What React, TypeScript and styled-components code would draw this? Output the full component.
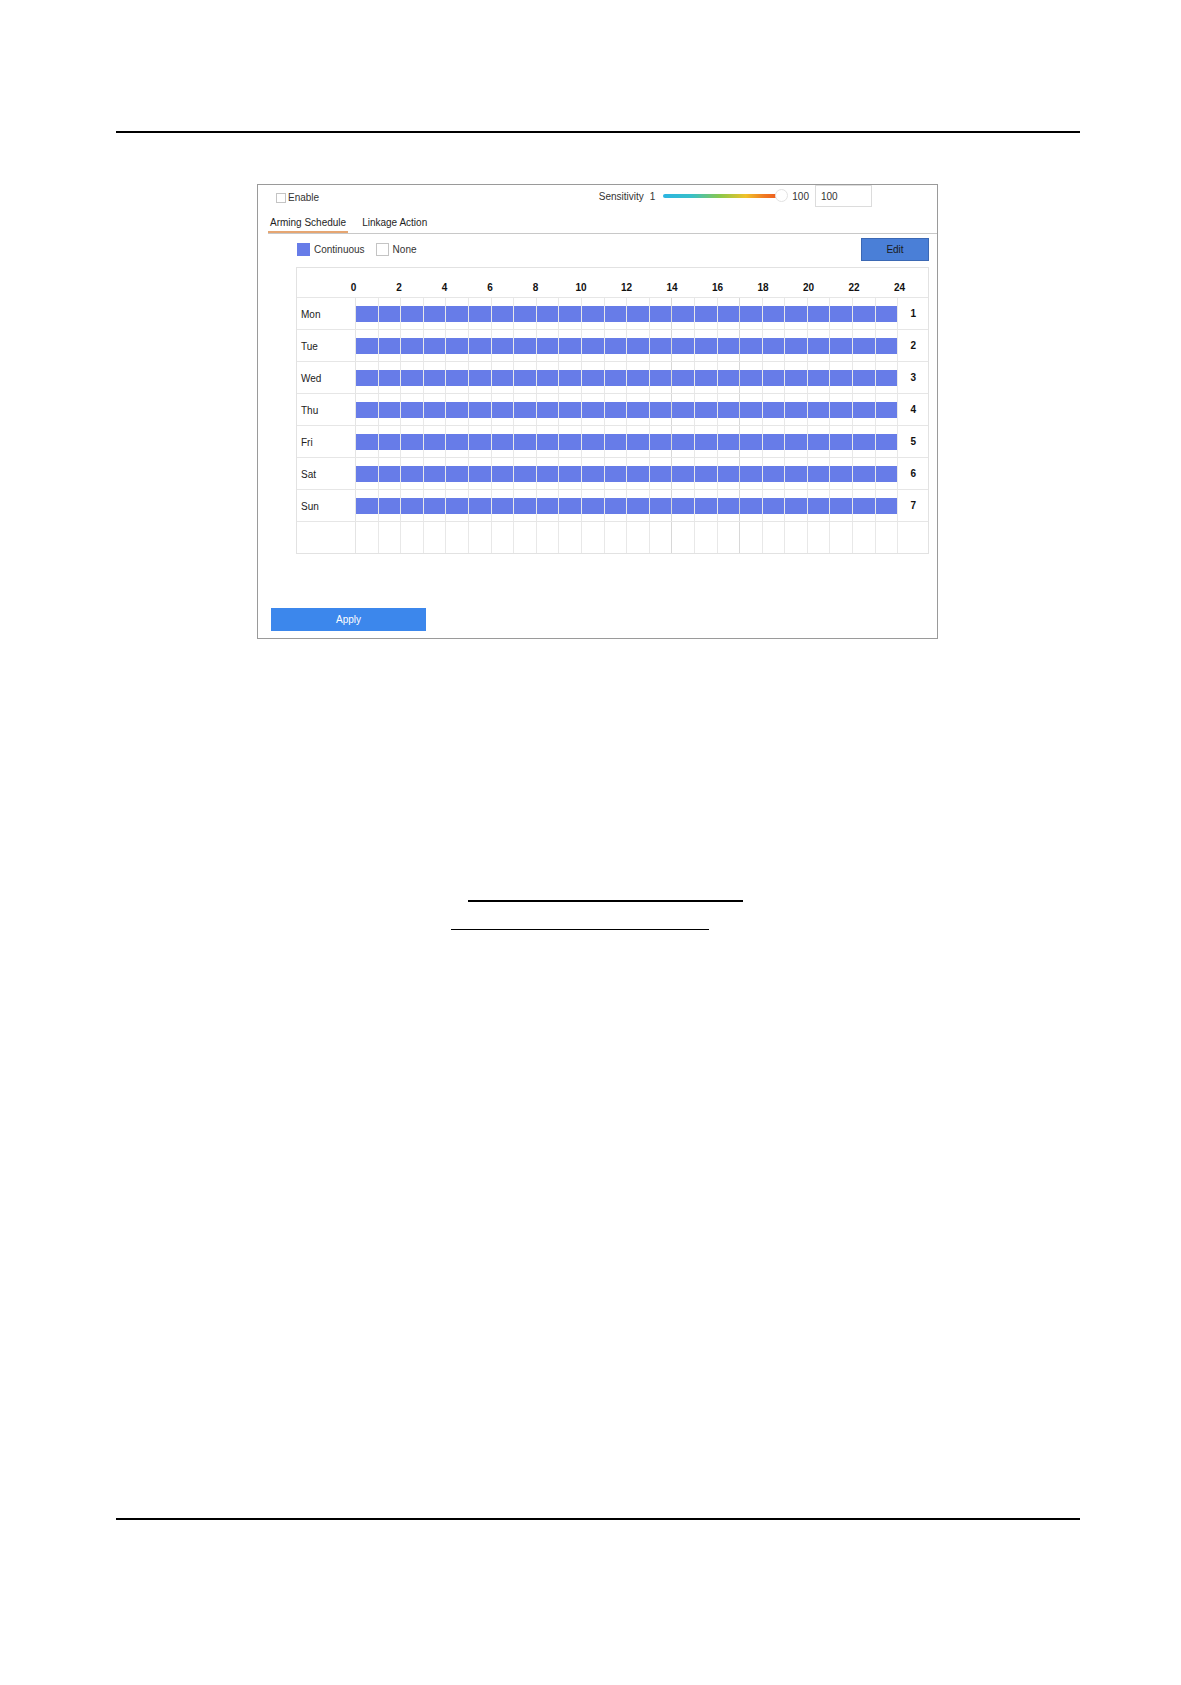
import React from 'react';
import styled, { createGlobalStyle } from 'styled-components';

const GlobalStyle = createGlobalStyle`
    body {
        margin: 0;
        background: #ffffff;
        font-family: 'Liberation Sans', Arial, sans-serif;
        color: #222222;
    }
`;

const Page = styled.div`
    width: 1181px;
    height: 1685px;
    display: flex;
    flex-direction: column;
    background: #ffffff;
`;

const Rule = styled.div<{ $top?: boolean }>`
    margin-left: 116px;
    width: 964px;
    height: 2px;
    background: #000000;
    margin-top: ${(props) => (props.$top ? '131px' : 'auto')};
    margin-bottom: ${(props) => (props.$top ? '0' : '165px')};
`;

const Panel = styled.div`
    box-sizing: border-box;
    margin: 51px 0 0 257px;
    width: 681px;
    height: 455px;
    border: 1px solid #9a9a9a;
    display: flex;
    flex-direction: column;
    font-size: 10px;
`;

const TopRow = styled.div`
    display: flex;
    align-items: center;
    height: 22px;
    padding: 0 65px 0 18px;
`;

const CheckLabel = styled.label`
    display: flex;
    align-items: center;
    gap: 2px;
    margin-top: 3px;
    color: #333333;
`;

const Box = styled.span<{ $size: number; $fill?: string }>`
    box-sizing: border-box;
    display: inline-block;
    width: ${(props) => props.$size}px;
    height: ${(props) => props.$size}px;
    border: 1px solid ${(props) => (props.$fill ? props.$fill : '#c4c4c4')};
    background: ${(props) => (props.$fill ? props.$fill : '#ffffff')};
`;

const Sensitivity = styled.div`
    margin-left: auto;
    display: flex;
    align-items: center;
    color: #333333;
`;

const One = styled.span`
    margin-left: 6px;
`;

const SliderTrack = styled.div`
    position: relative;
    width: 115px;
    height: 4px;
    margin: 0 14px 0 8px;
    border-radius: 2px;
    background: linear-gradient(90deg, #2cb5e2 0%, #38c0c8 25%, #8cc84a 50%, #f0c22a 72%, #f07a22 88%, #ee5a1e 100%);
`;

const Knob = styled.span`
    position: absolute;
    right: -10px;
    top: -5px;
    box-sizing: border-box;
    width: 13px;
    height: 13px;
    border-radius: 50%;
    background: #ffffff;
    border: 1px solid #e2e2e2;
`;

const ValueInput = styled.div`
    box-sizing: border-box;
    width: 57px;
    height: 22px;
    margin-left: 6px;
    padding-left: 5px;
    border: 1px solid #dcdcdc;
    display: flex;
    align-items: center;
    color: #333333;
`;

const Tabs = styled.div`
    display: flex;
    gap: 12px;
    margin: 7px 0 0 10px;
    border-bottom: 1px solid #c8c8c8;
`;

const Tab = styled.div<{ $active?: boolean }>`
    padding: 0 2px;
    line-height: 17px;
    color: #1e1e1e;
    border-bottom: 2px solid ${(props) => (props.$active ? '#e6a672' : 'transparent')};
`;

const Content = styled.div`
    margin: 0 8px 0 38px;
    display: flex;
    flex-direction: column;
`;

const LegendRow = styled.div`
    display: flex;
    align-items: center;
    height: 23px;
    margin-top: 4px;
    color: #333333;
`;

const LegendItem = styled.div`
    display: flex;
    align-items: center;
    gap: 4px;
    margin-left: 1px;
    margin-right: 10px;
`;

const EditButton = styled.button`
    margin-left: auto;
    box-sizing: border-box;
    width: 68px;
    height: 23px;
    border: 1px solid #3b68b4;
    background: #4a7fd7;
    color: #1a1a1a;
    font-family: 'Liberation Sans', Arial, sans-serif;
    font-size: 10px;
    padding: 0;
`;

const Grid = styled.div`
    margin-top: 6px;
    border: 1px solid #e2e2e2;
    display: flex;
    flex-direction: column;
`;

const HeaderRow = styled.div`
    display: flex;
    height: 30px;
    box-sizing: border-box;
    padding: 14px 0 0 33.75px;
    line-height: 12px;
    border-bottom: 1px solid #e6e6e6;
`;

const HourLabel = styled.span`
    width: 45.5px;
    flex: none;
    text-align: center;
    font-weight: bold;
    color: #111111;
`;

const DayRow = styled.div<{ $last?: boolean }>`
    display: flex;
    height: 31px;
    border-bottom: ${(props) => (props.$last ? 'none' : '1px solid #e6e6e6')};
`;

const DayName = styled.div`
    box-sizing: border-box;
    width: 59px;
    flex: none;
    padding: 1px 0 0 4px;
    display: flex;
    align-items: center;
    border-right: 1px solid #e4e4e4;
    color: #222222;
`;

const Cells = styled.div`
    display: flex;
    width: 542.4px;
    flex: none;
`;

const HourCell = styled.div<{ $mark?: boolean }>`
    box-sizing: border-box;
    width: 22.6px;
    flex: none;
    padding-top: 8px;
    border-right: 1px solid ${(props) => (props.$mark ? '#d8d8d8' : '#e8e8e8')};
`;

const Bar = styled.div`
    height: 16px;
    background: #677ce8;
`;

const DayNumber = styled.div`
    flex: 1;
    display: flex;
    align-items: center;
    justify-content: center;
    font-weight: bold;
    color: #111111;
`;

const ApplyButton = styled.button`
    box-sizing: border-box;
    width: 155px;
    height: 23px;
    margin: 54px 0 0 13px;
    border: none;
    background: #3c87ec;
    color: #ffffff;
    font-family: 'Liberation Sans', Arial, sans-serif;
    font-size: 10px;
    padding: 0;
`;

const Underline = styled.div<{ $left: number; $width: number; $top: number; $thick: number }>`
    margin-left: ${(props) => props.$left}px;
    margin-top: ${(props) => props.$top}px;
    width: ${(props) => props.$width}px;
    height: ${(props) => props.$thick}px;
    background: #000000;
`;

const hours = Array.from({ length: 13 }, (_, i) => i * 2);
const days = ['Mon', 'Tue', 'Wed', 'Thu', 'Fri', 'Sat', 'Sun'];
const slots = Array.from({ length: 24 }, (_, i) => i);

function ScheduleRow({ name, num, filled, last }: { name: string; num: string; filled: boolean; last?: boolean }) {
    return (
        <DayRow $last={last}>
            <DayName>{name}</DayName>
            <Cells>
                {slots.map((s) => (
                    <HourCell key={s} $mark={s === 13 || s === 16}>
                        {filled && <Bar />}
                    </HourCell>
                ))}
            </Cells>
            <DayNumber>{num}</DayNumber>
        </DayRow>
    );
}

export default function App() {
    return (
        <>
            <GlobalStyle />
            <Page>
                <Rule $top />
                <Panel>
                    <TopRow>
                        <CheckLabel>
                            <Box $size={10} />
                            Enable
                        </CheckLabel>
                        <Sensitivity>
                            <span>Sensitivity</span>
                            <One>1</One>
                            <SliderTrack>
                                <Knob />
                            </SliderTrack>
                            <span>100</span>
                            <ValueInput>100</ValueInput>
                        </Sensitivity>
                    </TopRow>
                    <Tabs>
                        <Tab $active>Arming Schedule</Tab>
                        <Tab>Linkage Action</Tab>
                    </Tabs>
                    <Content>
                        <LegendRow>
                            <LegendItem>
                                <Box $size={13} $fill="#677ce8" />
                                Continuous
                            </LegendItem>
                            <LegendItem>
                                <Box $size={13} />
                                None
                            </LegendItem>
                            <EditButton>Edit</EditButton>
                        </LegendRow>
                        <Grid>
                            <HeaderRow>
                                {hours.map((h) => (
                                    <HourLabel key={h}>{h}</HourLabel>
                                ))}
                            </HeaderRow>
                            {days.map((d, i) => (
                                <ScheduleRow key={d} name={d} num={String(i + 1)} filled />
                            ))}
                            <ScheduleRow name="" num="" filled={false} last />
                        </Grid>
                    </Content>
                    <ApplyButton>Apply</ApplyButton>
                </Panel>
                <Underline $left={468} $width={275} $top={261} $thick={2} />
                <Underline $left={451} $width={258} $top={27} $thick={1} />
                <Rule />
            </Page>
        </>
    );
}
